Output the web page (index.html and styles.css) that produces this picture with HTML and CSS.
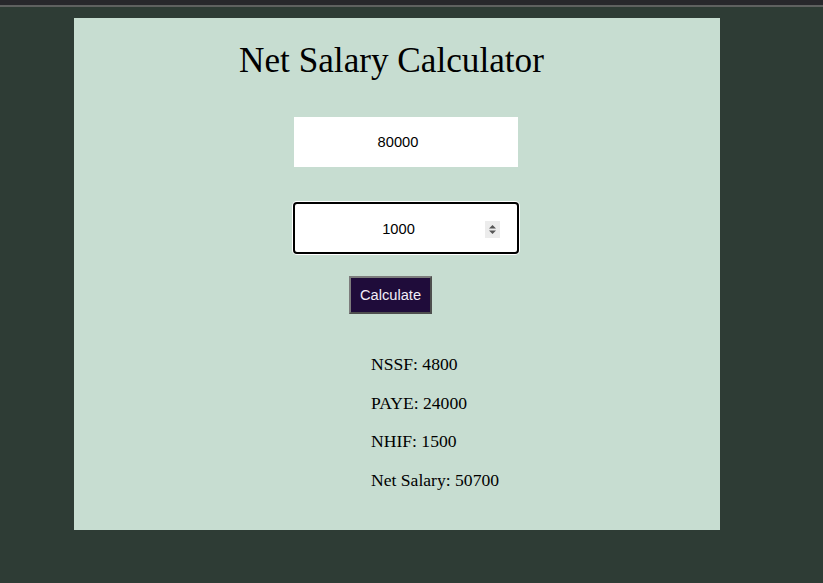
FILE: index.html
```html
<!DOCTYPE html>
<html>
<head>
<meta charset="utf-8">
<link rel="stylesheet" href="styles.css">
</head>
<body>
<div class="topbar"></div>
<main class="page">
  <section class="card">
    <h1 class="title">Net Salary Calculator</h1>
    <input class="field" type="number" value="80000">
    <div class="focus-wrap">
      <input class="field field-focus" type="number" value="1000">
      <svg class="spinner" width="15" height="17" viewBox="0 0 15 17">
        <rect width="15" height="17" fill="#ececec"/>
        <path d="M4 7.5 L7.5 4 L11 7.5 Z" fill="#555"/>
        <path d="M4 9.5 L7.5 13 L11 9.5 Z" fill="#555"/>
      </svg>
    </div>
    <button class="calc">Calculate</button>
    <div class="results">
      <p>NSSF: 4800</p>
      <p>PAYE: 24000</p>
      <p>NHIF: 1500</p>
      <p>Net Salary: 50700</p>
    </div>
  </section>
</main>
</body>
</html>
```
FILE: styles.css
```css
html, body {
  margin: 0;
  padding: 0;
  background: #2e3c35;
  height: 100%;
  overflow: hidden;
}
.topbar {
  height: 5px;
  background: #28282c;
  border-bottom: 2px solid #5f6160;
}
.page {
  padding: 11px 0 0 74px;
}
.card {
  width: 646px;
  height: 512px;
  box-sizing: border-box;
  background: #c7ddd1;
  display: flex;
  flex-direction: column;
  align-items: flex-start;
  padding-top: 23px;
  font-family: "Liberation Serif", "Times New Roman", serif;
  color: #000;
}
.title {
  align-self: stretch;
  margin: 0;
  padding-right: 11px;
  text-align: center;
  font-size: 35.2px;
  font-weight: normal;
  line-height: 40px;
}
.field {
  margin: 36px 0 0 220px;
  width: 224px;
  height: 50px;
  box-sizing: border-box;
  border: none;
  background: #fff;
  padding: 0 35px 0 19px;
  font-family: "Liberation Sans", Arial, sans-serif;
  font-size: 14.67px;
  color: #000;
  text-align: center;
  outline: none;
  -moz-appearance: textfield;
}
.field::-webkit-inner-spin-button,
.field::-webkit-outer-spin-button {
  -webkit-appearance: none;
  margin: 0;
}
.focus-wrap {
  position: relative;
  margin: 35px 0 0 219px;
}
.field-focus {
  display: block;
  margin: 0;
  width: 226px;
  height: 52px;
  padding: 2px 35px 0 20px;
  border-radius: 4px;
  box-shadow: inset 0 0 0 2px #000, 0 0 0 1px #fff;
}
.spinner {
  position: absolute;
  left: 192px;
  top: 19px;
}
.calc {
  margin: 22px 0 0 275px;
  width: 83px;
  height: 38px;
  box-sizing: border-box;
  background: #1f0c3a;
  color: #f2eef8;
  border: 2px solid;
  border-color: #7c7c7c #4e4e4e #4e4e4e #7c7c7c;
  font-family: "Liberation Sans", Arial, sans-serif;
  font-size: 14.67px;
  padding: 0;
}
.results {
  margin: 22px 0 0 297px;
  font-size: 17.6px;
}
.results p {
  margin: 18px 0;
  line-height: 20.7px;
}
```
